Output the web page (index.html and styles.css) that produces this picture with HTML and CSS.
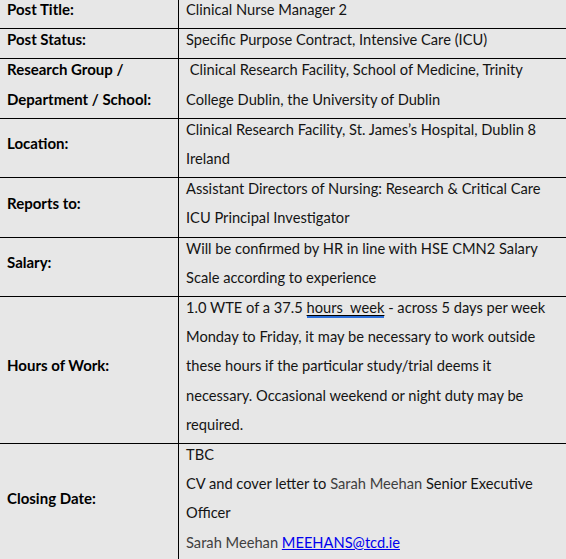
FILE: index.html
```html
<!DOCTYPE html>
<html>
<head>
<meta charset="utf-8">
<link rel="stylesheet" href="styles.css">
</head>
<body>
<table class="post-table">
  <tr>
    <th class="label"><div class="cell">Post Title:</div></th>
    <td class="value"><div class="cell">Clinical Nurse Manager 2</div></td>
  </tr>
  <tr>
    <th class="label"><div class="cell">Post Status:</div></th>
    <td class="value"><div class="cell">Specific Purpose Contract, Intensive Care (ICU)</div></td>
  </tr>
  <tr>
    <th class="label"><div class="cell">Research Group /<br>Department / School:</div></th>
    <td class="value"><div class="cell">&nbsp;Clinical Research Facility, School of Medicine, Trinity<br>College Dublin, the University of Dublin</div></td>
  </tr>
  <tr>
    <th class="label"><div class="cell">Location:</div></th>
    <td class="value"><div class="cell">Clinical Research Facility, St. James’s Hospital, Dublin 8<br>Ireland</div></td>
  </tr>
  <tr>
    <th class="label"><div class="cell">Reports to:</div></th>
    <td class="value"><div class="cell">Assistant Directors of Nursing: Research &amp; Critical Care<br>ICU Principal Investigator</div></td>
  </tr>
  <tr>
    <th class="label"><div class="cell">Salary:</div></th>
    <td class="value"><div class="cell">Will be confirmed by HR in line with HSE CMN2 Salary<br>Scale according to experience</div></td>
  </tr>
  <tr>
    <th class="label"><div class="cell">Hours of Work:</div></th>
    <td class="value"><div class="cell">1.0 WTE of a 37.5 <span class="grammar">hours&nbsp; week</span> - across 5 days per week<br>Monday to Friday, it may be necessary to work outside<br>these hours if the particular study/trial deems it<br>necessary. Occasional weekend or night duty may be<br>required.</div></td>
  </tr>
  <tr>
    <th class="label"><div class="cell">Closing Date:</div></th>
    <td class="value"><div class="cell">TBC<br>CV and cover letter to <span class="muted">Sarah Meehan</span> Senior Executive<br>Officer<br><span class="muted">Sarah Meehan</span> <a class="mail" href="#">MEEHANS@tcd.ie</a></div></td>
  </tr>
</table>
</body>
</html>
```

FILE: styles.css
```css
html, body {
  margin: 0;
  padding: 0;
  background: #e7e7e7;
  overflow: hidden;
}

.post-table {
  border-collapse: collapse;
  margin: -2px 0 0 -1px;
  width: 640px;
  table-layout: fixed;
  font-family: Lato, "Open Sans", sans-serif;
  font-size: 14.67px;
  line-height: 29.2px;
}

.post-table th,
.post-table td {
  border: 1px solid #000;
  padding: 0 7px;
  white-space: nowrap;
}

.cell {
  margin-top: -4px;
  margin-bottom: 4px;
}

.label {
  width: 164px;
  text-align: left;
  vertical-align: middle;
  font-weight: 700;
  font-size: 15px;
  color: #000;
}

.value {
  vertical-align: top;
  font-weight: 400;
  color: #141414;
}

.grammar {
  text-decoration: underline;
  text-decoration-color: #000;
  text-underline-offset: 2px;
  border-bottom: 2px solid #2a6fdb;
}

.muted {
  color: #404040;
}

.mail {
  color: #0000ee;
  text-decoration: underline;
}
```
